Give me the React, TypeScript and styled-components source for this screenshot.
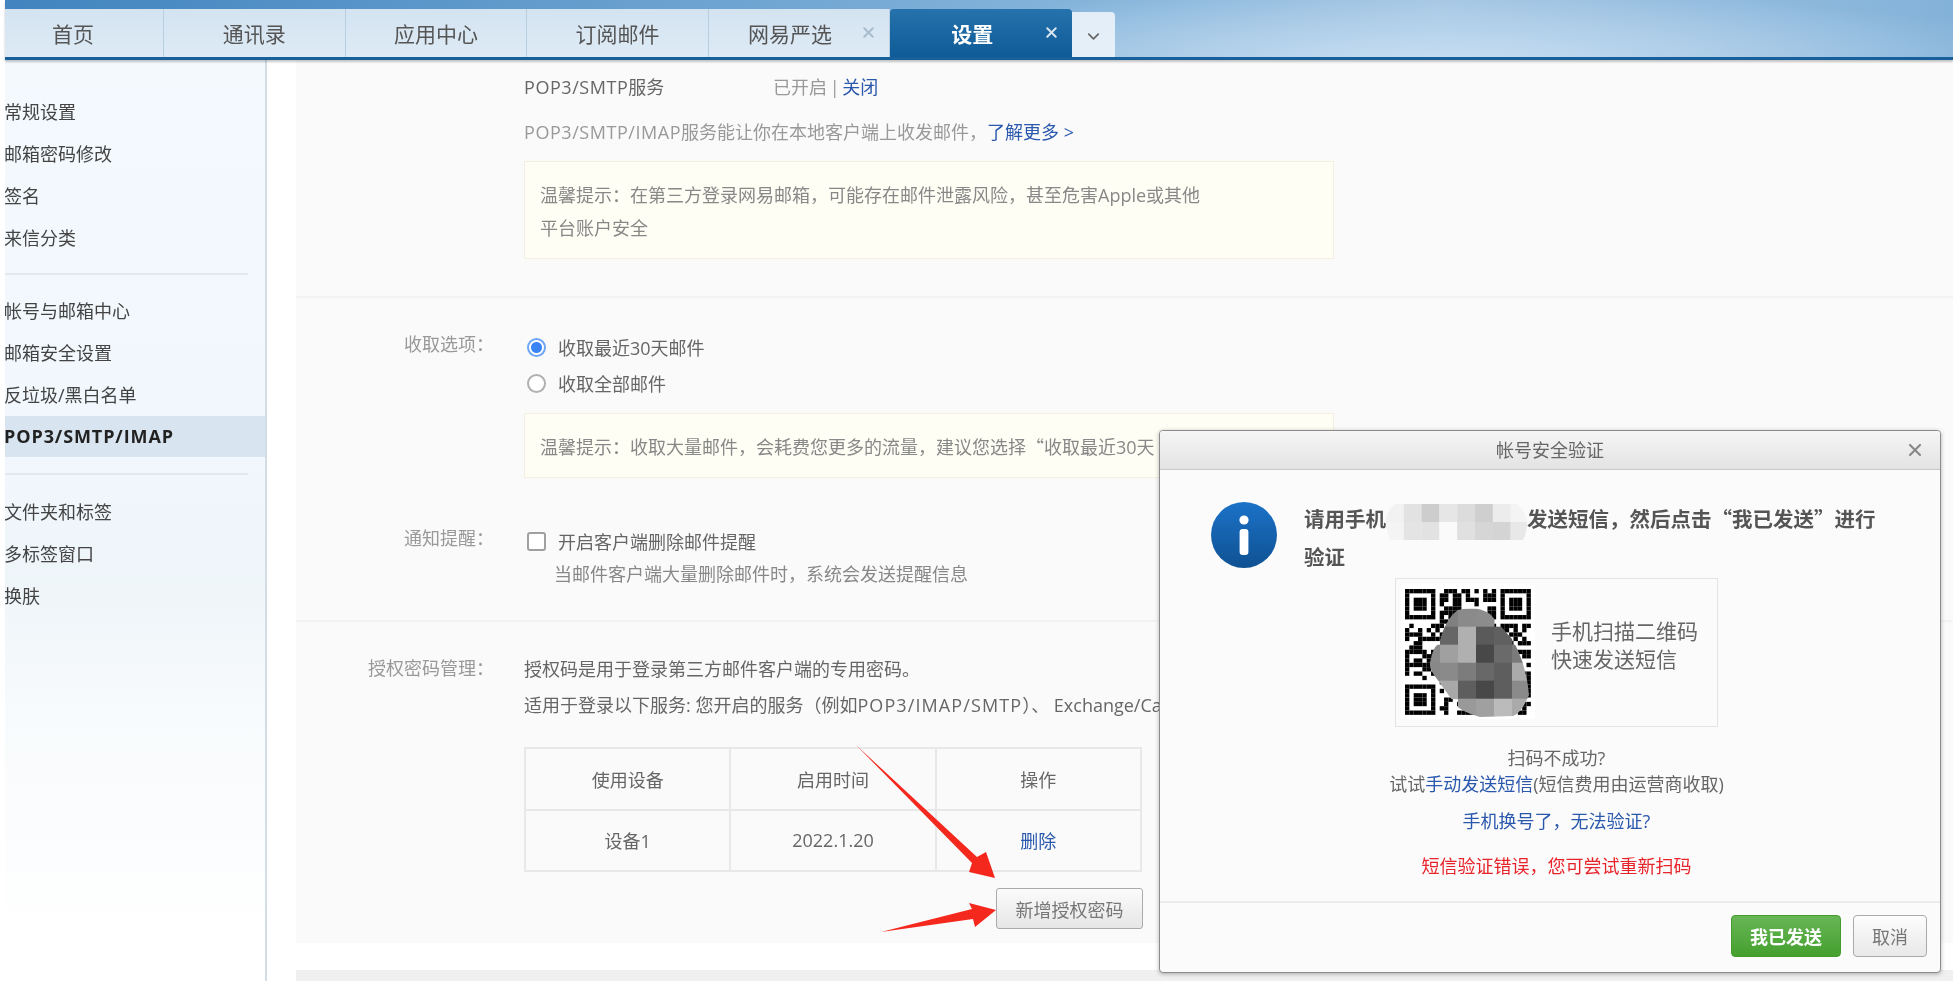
import { Fragment } from "react";
import { createGlobalStyle, styled } from "styled-components";
import { ChevronDown, X } from "lucide-react";

const GlobalStyle = createGlobalStyle`
  html,
  body {
    margin: 0;
    padding: 0;
    background: #fff;
  }

  body {
    font-family: "Open Sans", "Noto Sans CJK SC", sans-serif;
    font-size: 18px;
    color: #666;
  }
`;

// full-width punctuation, as the page uses it
const COMMA = "\uFF0C";
const COLON = "\uFF1A";
const OPEN = "\uFF08";
const CLOSE = "\uFF09";

const tabs = [
  { label: "通讯录" },
  { label: "应用中心" },
  { label: "订阅邮件" },
];

const sideGroups = [
  ["常规设置", "邮箱密码修改", "签名", "来信分类"],
  ["帐号与邮箱中心", "邮箱安全设置", "反垃圾/黑白名单", "POP3/SMTP/IMAP"],
  ["文件夹和标签", "多标签窗口", "换肤"],
];

const finderAt = (col: number, row: number, n: number) => {
  const inCol = col >= n && col < n + 7;
  return inCol && row >= 0;
};

function isQrDark(col: number, row: number) {
  const size = 29;
  const corners = [
    [0, 0],
    [size - 7, 0],
    [0, size - 7],
  ];
  for (const [cx, cy] of corners) {
    if (finderAt(col, 0, cx) && row >= cy && row < cy + 7) {
      const x = col - cx;
      const y = row - cy;
      const ring = x === 0 || x === 6 || y === 0 || y === 6;
      const core = x >= 2 && x <= 4 && y >= 2 && y <= 4;
      return ring || core;
    }
    if (col >= cx - 1 && col <= cx + 7 && row >= cy - 1 && row <= cy + 7) return false;
  }
  const seed = Math.sin(col * 12.9898 + row * 78.233) * 43758.5453;
  return seed - Math.floor(seed) > 0.48;
}

const qrCells: { col: number; row: number }[] = [];
for (let row = 0; row < 29; row++) {
  for (let col = 0; col < 29; col++) {
    if (isQrDark(col, row)) qrCells.push({ col, row });
  }
}

// mosaic over the code: rows of [first column, ...greys]
const mosaic: [number, string[]][] = [
  [1, ["#808080", "#8a8a8a", "#8c8c8c"]],
  [1, ["#666666", "#b0b0b0", "#5a5a5a", "#606060"]],
  [0, ["#8a8a8a", "#a0a0a0", "#b0b0b0", "#484848", "#6a6a6a", "#7a7a7a"]],
  [0, ["#888888", "#8a8a8a", "#7c7c7c", "#686868", "#5e5e5e", "#aaaaaa"]],
  [1, ["#a8a8a8", "#5e5e5e", "#484848", "#5e5e5e", "#8a8a8a"]],
  [2, ["#999999", "#a0a0a0", "#bbbbbb", "#aaaaaa"]],
];

const phoneMosaic = [
  ["#f2f2f2", "#e2e2e2", "#cdcdcd", "#e6e6e6", "#dcdcdc", "#cfcfcf", "#ececec", "#f4f4f4"],
  ["#f4f4f4", "#e4e4e4", "#e2e2e2", "#fafafa", "#e0e0e0", "#d6d6d6", "#d4d4d4", "#e8e8e8"],
];

function QrCode() {
  return (
    <QrImage viewBox="0 0 134 135">
      <defs>
        <clipPath id="qr-blob">
          <path d="M57 26 Q76 21 89 30 L111 55 Q125 78 128 111 Q120 130 112 132 L79 133 Q60 128 54 120 L36 95 Q28 85 29 79 Q32 62 38 60 Q44 35 57 26 Z" />
        </clipPath>
      </defs>
      <rect width="134" height="135" fill="#fff" />
      <g transform="translate(4 5) scale(4.34)">
        {qrCells.map((cell) => (
          <rect key={`${cell.col}-${cell.row}`} x={cell.col} y={cell.row} width="1" height="1" fill="#000" />
        ))}
      </g>
      <g clipPath="url(#qr-blob)">
        {mosaic.map(([first, greys], row) =>
          greys.map((grey, index) => (
            <rect key={`${row}-${index}`} x={21 + (first + index) * 18} y={24.7 + row * 18} width="18.5" height="18.5" fill={grey} />
          )),
        )}
      </g>
    </QrImage>
  );
}

function PhoneMask() {
  return (
    <PhoneMaskImage viewBox="0 0 141 36">
      <defs>
        <clipPath id="phone-blob">
          <path d="M9 0 H132 Q141 10 141 18 Q141 28 137 36 H4 Q0 26 0 18 Q0 8 9 0 Z" />
        </clipPath>
      </defs>
      <g clipPath="url(#phone-blob)">
        {phoneMosaic.map((row, y) =>
          row.map((grey, x) => <rect key={`${x}-${y}`} x={x * 17.8} y={y * 18} width="18" height="18" fill={grey} />),
        )}
      </g>
    </PhoneMaskImage>
  );
}

function InfoIcon() {
  return (
    <InfoImage viewBox="0 0 66 66">
      <defs>
        <linearGradient id="info-fill" x1="0" y1="0" x2="0" y2="1">
          <stop offset="0" stopColor="#1b72c8" />
          <stop offset="1" stopColor="#0f5192" />
        </linearGradient>
      </defs>
      <circle cx="33" cy="33" r="33" fill="url(#info-fill)" />
      <circle cx="33" cy="18" r="4.6" fill="#fff" />
      <rect x="28.6" y="27" width="8.8" height="26" rx="3" fill="#fff" />
    </InfoImage>
  );
}

export default function App() {
  return (
    <Page>
      <GlobalStyle />
      <TabBar>
        <Tab $first>首页</Tab>
        {tabs.map((tab) => (
          <Tab key={tab.label}>{tab.label}</Tab>
        ))}
        <Tab $closable>
          网易严选
          <TabClose>
            <X size={17} strokeWidth={2.8} />
          </TabClose>
        </Tab>
        <Tab $closable $active>
          设置
          <TabClose $active>
            <X size={17} strokeWidth={2.8} />
          </TabClose>
        </Tab>
        <MoreTab>
          <ChevronDown size={19} strokeWidth={2.2} />
        </MoreTab>
      </TabBar>

      <Body>
        <Sidebar>
          {sideGroups.map((group, index) => (
            <Fragment key={index}>
              {index > 0 && <SideDivider $second={index === 2} />}
              {group.map((item) => (
                <SideItem key={item} $active={item === "POP3/SMTP/IMAP"}>
                  {item}
                </SideItem>
              ))}
            </Fragment>
          ))}
        </Sidebar>

        <Main>
          <Panel>
            <FirstSection>
              <ServiceLine>
                <ServiceName>
                  <Caps>POP3/SMTP</Caps>服务
                </ServiceName>
                <Muted>已开启 | </Muted>
                <Link>关闭</Link>
              </ServiceLine>
              <Description>
                <Caps>POP3/SMTP/IMAP</Caps>服务能让你在本地客户端上收发邮件{COMMA}<Link>了解更多 &gt;</Link>
              </Description>
              <TipBox $tall>
                温馨提示{COLON}在第三方登录网易邮箱{COMMA}可能存在邮件泄露风险{COMMA}甚至危害Apple或其他
                <br />
                平台账户安全
              </TipBox>
            </FirstSection>

            <OptionsSection>
              <FormRow>
                <FormLabel>收取选项{COLON}</FormLabel>
                <div>
                  <OptionLine>
                    <Radio $checked />
                    收取最近30天邮件
                  </OptionLine>
                  <OptionLine>
                    <Radio />
                    收取全部邮件
                  </OptionLine>
                  <TipBox>
                    温馨提示{COLON}收取大量邮件{COMMA}会耗费您更多的流量{COMMA}建议您选择<Quote>“</Quote>收取最近30天
                  </TipBox>
                </div>
              </FormRow>
              <NoticeRow>
                <FormLabel>通知提醒{COLON}</FormLabel>
                <div>
                  <OptionLine>
                    <CheckBox />
                    开启客户端删除邮件提醒
                  </OptionLine>
                  <OptionHint>当邮件客户端大量删除邮件时{COMMA}系统会发送提醒信息</OptionHint>
                </div>
              </NoticeRow>
            </OptionsSection>

            <AuthSection>
              <FormRow>
                <FormLabel $nudge>授权密码管理{COLON}</FormLabel>
                <AuthBlock>
                  <AuthText>授权码是用于登录第三方邮件客户端的专用密码。</AuthText>
                  <AuthText>
                    适用于登录以下服务: 您开启的服务{OPEN}例如<Caps $wide>POP3/IMAP/SMTP</Caps>
                    {CLOSE}、 Exchange/Ca
                  </AuthText>
                  <DeviceTable>
                    <tbody>
                      <tr>
                        <td>使用设备</td>
                        <td>启用时间</td>
                        <td>操作</td>
                      </tr>
                      <tr>
                        <td>设备1</td>
                        <td>2022.1.20</td>
                        <td>
                          <Link>删除</Link>
                        </td>
                      </tr>
                    </tbody>
                  </DeviceTable>
                  <AddButton>新增授权密码</AddButton>
                </AuthBlock>
              </FormRow>
            </AuthSection>
          </Panel>
          <BottomBand />
        </Main>
      </Body>

      <Arrows viewBox="0 0 1953 981">
        <polygon points="856,745 977,857 986,852 995,878 969,872 972,863" fill="#f5281e" />
        <polygon points="881,932 972,909 969,903 996,910 975,927 973,919" fill="#f5281e" />
      </Arrows>

      <Modal>
        <ModalHeader>
          帐号安全验证
          <ModalClose>
            <X size={20} strokeWidth={2.6} />
          </ModalClose>
        </ModalHeader>
        <ModalBody>
          <Message>
            <InfoIcon />
            <MessageText>
              请用手机
              <PhoneMask />
              发送短信{COMMA}然后点击<Quote>“</Quote>我已发送<Quote>”</Quote>进行验证
            </MessageText>
          </Message>
          <ScanArea>
            <ScanBox>
              <QrCode />
              <ScanText>
                手机扫描二维码
                <br />
                快速发送短信
              </ScanText>
            </ScanBox>
            <HelpBlock>
              扫码不成功?
              <br />
              试试<Link>手动发送短信</Link>(短信费用由运营商收取)
            </HelpBlock>
            <ChangePhone>手机换号了{COMMA}无法验证?</ChangePhone>
            <ErrorText>短信验证错误{COMMA}您可尝试重新扫码</ErrorText>
          </ScanArea>
        </ModalBody>
        <ModalFooter>
          <PrimaryButton>我已发送</PrimaryButton>
          <CancelButton>取消</CancelButton>
        </ModalFooter>
      </Modal>
    </Page>
  );
}

const Page = styled.div`
  position: relative;
  width: 1953px;
  height: 981px;
  overflow: hidden;
  padding-left: 5px;
  box-sizing: border-box;
  background: #fff;
  filter: blur(0.6px);
`;

const TabBar = styled.div`
  position: relative;
  z-index: 1;
  display: flex;
  align-items: flex-end;
  height: 57px;
  border-bottom: 3px solid #17609b;
  box-shadow: 0 2px 2px rgba(0, 0, 0, 0.22);
  background: radial-gradient(ellipse 620px 70px at 1430px 60px, #c6ddf1 0%, rgba(198, 221, 241, 0) 100%),
    linear-gradient(90deg, #4184bf 0, #86b5db 1100px, #a2c5e3 1430px, #83b2d9 1953px);
`;

const Tab = styled.div<{ $first?: boolean; $closable?: boolean; $active?: boolean }>`
  position: relative;
  display: flex;
  align-items: center;
  justify-content: center;
  box-sizing: border-box;
  width: ${(p) => (p.$first ? "159px" : "181.6px")};
  height: 48px;
  padding-right: ${(p) => (p.$first ? "22px" : p.$closable ? "18px" : "0")};
  border-right: ${(p) => (p.$active ? "none" : "1px solid #b9cfe0")};
  border-radius: ${(p) => (p.$active ? "4px 4px 0 0" : "0")};
  background: ${(p) =>
    p.$active ? "linear-gradient(180deg, #2572ad, #0f5b97)" : "linear-gradient(180deg, #d3e3f0, #deebf6)"};
  color: ${(p) => (p.$active ? "#fff" : "#555")};
  font-size: 21px;
  font-weight: ${(p) => (p.$active ? 700 : 400)};
`;

const TabClose = styled.span<{ $active?: boolean }>`
  position: absolute;
  right: 12px;
  top: 15px;
  display: flex;
  color: ${(p) => (p.$active ? "#d8e6f0" : "#a9bccd")};
`;

const MoreTab = styled.div`
  display: flex;
  align-items: center;
  justify-content: center;
  width: 43px;
  height: 45px;
  padding-top: 3px;
  box-sizing: border-box;
  border-radius: 0 4px 0 0;
  background: linear-gradient(180deg, #e2edf7, #e6f0f9);
  color: #666;
`;

const Body = styled.div`
  display: flex;
  height: 921px;
`;

const Sidebar = styled.div`
  flex: none;
  box-sizing: border-box;
  width: 262px;
  padding-top: 31px;
  border-right: 2px solid #d2dde6;
  overflow: hidden;
  background: linear-gradient(180deg, #f3f9fd 0, #f1f7fc 400px, #eef5f9 520px, #f7fafc 640px, #fff 880px);
`;

const SideDivider = styled.div<{ $second?: boolean }>`
  width: 243px;
  height: 2px;
  margin: ${(p) => (p.$second ? "16px 0 16px" : "14px 0 15px")};
  background: #e4e8ec;
`;

const SideItem = styled.div<{ $active?: boolean }>`
  height: ${(p) => (p.$active ? "41px" : "42px")};
  line-height: ${(p) => (p.$active ? "41px" : "42px")};
  text-indent: -1px;
  white-space: nowrap;
  letter-spacing: ${(p) => (p.$active ? "0.9px" : "0")};
  color: ${(p) => (p.$active ? "#222" : "#444")};
  font-weight: ${(p) => (p.$active ? 700 : 400)};
  background: ${(p) => (p.$active ? "#d8e5f0" : "transparent")};
`;

const Main = styled.div`
  flex: 1;
  padding-left: 29px;
  min-width: 0;
  background: #fff;
`;

const Panel = styled.div`
  height: 883px;
  background: #fafafa;
`;

const BottomBand = styled.div`
  height: 11px;
  margin-top: 27px;
  background: #f0f0f0;
`;

const FirstSection = styled.section`
  box-sizing: border-box;
  height: 238px;
  padding: 12px 0 0 228px;
  border-bottom: 2px solid #f2f2f2;
`;

const ServiceLine = styled.div`
  line-height: 30px;
  white-space: nowrap;
`;

const ServiceName = styled.span`
  display: inline-block;
  width: 249px;
`;

const Caps = styled.span<{ $wide?: boolean }>`
  letter-spacing: ${(p) => (p.$wide ? "1.1px" : "0.55px")};
`;

const Quote = styled.span`
  font-family: "Noto Sans CJK SC", sans-serif;
`;

const Muted = styled.span`
  color: #999;
  word-spacing: -2px;
`;

const Link = styled.a`
  color: #2a58ad;
`;

const Description = styled.div`
  margin-top: 15px;
  line-height: 30px;
  color: #999;
  white-space: nowrap;
`;

const TipBox = styled.div<{ $tall?: boolean }>`
  box-sizing: border-box;
  width: 810px;
  height: ${(p) => (p.$tall ? "98px" : "65px")};
  margin-top: ${(p) => (p.$tall ? "14px" : "12px")};
  padding: ${(p) => (p.$tall ? "17px 15px" : "16px 15px")};
  border: 1px solid #f3f0df;
  background: #fffef4;
  color: #888;
  line-height: 33px;
  white-space: nowrap;
  overflow: hidden;
`;

const OptionsSection = styled.section`
  box-sizing: border-box;
  height: 324px;
  padding-top: 31px;
  border-bottom: 2px solid #f2f2f2;
`;

const FormRow = styled.div`
  display: grid;
  grid-template-columns: 228px 1fr;
`;

const NoticeRow = styled(FormRow)`
  margin-top: 45px;
`;

const FormLabel = styled.div<{ $nudge?: boolean }>`
  padding-right: 30px;
  padding-top: ${(p) => (p.$nudge ? "2px" : "0")};
  line-height: 30px;
  text-align: right;
  color: #999;
  white-space: nowrap;
`;

const OptionLine = styled.div`
  display: flex;
  align-items: center;
  gap: 12px;
  height: 36px;
  padding-left: 3px;
  white-space: nowrap;
`;

const Radio = styled.span<{ $checked?: boolean }>`
  position: relative;
  flex: none;
  box-sizing: border-box;
  width: 19px;
  height: 19px;
  border: 2px solid ${(p) => (p.$checked ? "#6ea6f5" : "#b0b0b0")};
  border-radius: 50%;
  background: ${(p) => (p.$checked ? "radial-gradient(circle, #3b84f3 0 5px, #fff 6px)" : "#fff")};
`;

const CheckBox = styled.span`
  flex: none;
  box-sizing: border-box;
  width: 19px;
  height: 19px;
  border: 2px solid #a0a0a0;
  border-radius: 3px;
  background: #fff;
`;

const OptionHint = styled.div`
  padding-left: 30px;
  line-height: 30px;
  color: #888;
  white-space: nowrap;
`;

const AuthSection = styled.section`
  padding-top: 29px;
`;

const AuthBlock = styled.div`
  display: flex;
  flex-direction: column;
  align-items: flex-start;
  width: 619px;
`;

const AuthText = styled.div`
  line-height: 36px;
  white-space: nowrap;
`;

const DeviceTable = styled.table`
  width: 618px;
  margin-top: 24px;
  border-collapse: collapse;
  table-layout: fixed;
  color: #666;

  td {
    height: 59.5px;
    padding: 0;
    border: 2px solid #e8e8e8;
    text-align: center;
  }
`;

const AddButton = styled.button`
  align-self: flex-end;
  width: 147px;
  height: 41px;
  margin-top: 16px;
  padding: 0;
  border: 1px solid #aaa;
  border-radius: 3px;
  background: linear-gradient(180deg, #fbfbfb, #e6e6e6);
  color: #777;
  font: inherit;
`;

const Arrows = styled.svg`
  position: absolute;
  left: 0;
  top: 0;
  width: 1953px;
  height: 981px;
  z-index: 2;
  pointer-events: none;
`;

const Modal = styled.div`
  position: absolute;
  left: 1159px;
  top: 430px;
  z-index: 3;
  display: flex;
  flex-direction: column;
  box-sizing: border-box;
  width: 782px;
  height: 543px;
  border: 1px solid #8c8c8c;
  border-radius: 4px;
  background: #fbfbfb;
  box-shadow: 0 1px 4px rgba(0, 0, 0, 0.3);
  overflow: hidden;
`;

const ModalHeader = styled.div`
  position: relative;
  flex: none;
  height: 38px;
  line-height: 38px;
  border-bottom: 1px solid #c8c8c8;
  background: linear-gradient(180deg, #f6f6f6, #e3e3e3);
  color: #666;
  text-align: center;
`;

const ModalClose = styled.span`
  position: absolute;
  right: 15px;
  top: 9px;
  display: flex;
  color: #888;
`;

const ModalBody = styled.div`
  flex: 1;
`;

const Message = styled.div`
  display: flex;
  gap: 27px;
  padding: 31px 0 0 51px;
`;

const InfoImage = styled.svg`
  flex: none;
  width: 66px;
  height: 66px;
  margin-top: 1px;
`;

const MessageText = styled.div`
  width: 590px;
  font-size: 20.5px;
  font-weight: 700;
  line-height: 34px;
  color: #555;
`;

const PhoneMaskImage = styled.svg`
  display: inline-block;
  width: 141px;
  height: 36px;
  vertical-align: middle;
`;

const ScanArea = styled.div`
  display: flex;
  flex-direction: column;
  align-items: center;
  margin-top: 4px;
  padding-left: 13px;
  text-align: center;
`;

const ScanBox = styled.div`
  display: flex;
  gap: 16px;
  box-sizing: border-box;
  width: 323px;
  height: 149px;
  padding: 5px;
  border: 1px solid #e4e4e4;
  text-align: left;
`;

const QrImage = styled.svg`
  flex: none;
  width: 134px;
  height: 135px;
`;

const ScanText = styled.div`
  margin-top: 33px;
  font-size: 21px;
  line-height: 28px;
  white-space: nowrap;
`;

const HelpBlock = styled.div`
  margin-top: 18px;
  line-height: 26px;
  white-space: nowrap;
`;

const ChangePhone = styled.div`
  margin-top: 11px;
  line-height: 26px;
  color: #2a58ad;
`;

const ErrorText = styled.div`
  margin-top: 19px;
  line-height: 26px;
  color: #e8242b;
`;

const ModalFooter = styled.div`
  flex: none;
  display: flex;
  justify-content: flex-end;
  gap: 12px;
  box-sizing: border-box;
  height: 71px;
  padding: 12px 13px 0 0;
  border-top: 2px solid #ececec;
`;

const PrimaryButton = styled.button`
  width: 110px;
  height: 42px;
  padding: 0;
  border: 1px solid #429b2c;
  border-radius: 4px;
  background: linear-gradient(180deg, #68b657, #44a02d);
  color: #fff;
  font: inherit;
  font-weight: 700;
`;

const CancelButton = styled.button`
  width: 74px;
  height: 42px;
  padding: 0;
  border: 1px solid #aaa;
  border-radius: 4px;
  background: linear-gradient(180deg, #fdfdfd, #e8e8e8);
  color: #777;
  font: inherit;
`;
